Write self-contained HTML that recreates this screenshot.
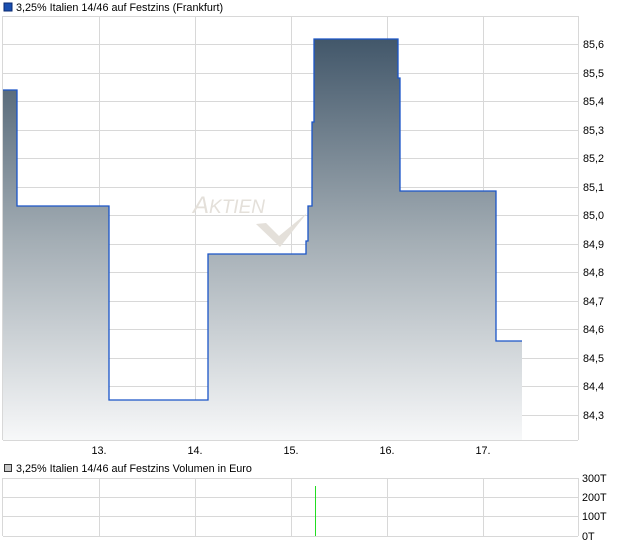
<!DOCTYPE html>
<html><head><style>
body{margin:0;width:620px;height:546px;background:#fff;font-family:"Liberation Sans",sans-serif;font-size:11px;color:#000;overflow:hidden}
</style></head><body>
<svg width="620" height="546" xmlns="http://www.w3.org/2000/svg" font-family="Liberation Sans, sans-serif" font-size="10.8">
<defs><linearGradient id="g" x1="0" y1="39" x2="0" y2="440" gradientUnits="userSpaceOnUse">
<stop offset="0" stop-color="#42576a"/><stop offset="0.5" stop-color="#a3adb4"/><stop offset="1" stop-color="#f7f8f9"/></linearGradient></defs>
<rect x="4" y="3" width="8" height="8" fill="#1a4fb0" stroke="#0a2a70" stroke-width="1"/>
<text x="16" y="11">3,25% Italien 14/46 auf Festzins (Frankfurt)</text>
<g stroke="#d8d8d8" stroke-width="1">
<line x1="3" y1="16.5" x2="578" y2="16.5"/>
<line x1="3" y1="44.5" x2="578" y2="44.5"/><line x1="3" y1="73.5" x2="578" y2="73.5"/><line x1="3" y1="101.5" x2="578" y2="101.5"/><line x1="3" y1="130.5" x2="578" y2="130.5"/><line x1="3" y1="158.5" x2="578" y2="158.5"/><line x1="3" y1="187.5" x2="578" y2="187.5"/><line x1="3" y1="215.5" x2="578" y2="215.5"/><line x1="3" y1="244.5" x2="578" y2="244.5"/><line x1="3" y1="272.5" x2="578" y2="272.5"/><line x1="3" y1="301.5" x2="578" y2="301.5"/><line x1="3" y1="329.5" x2="578" y2="329.5"/><line x1="3" y1="358.5" x2="578" y2="358.5"/><line x1="3" y1="386.5" x2="578" y2="386.5"/><line x1="3" y1="415.5" x2="578" y2="415.5"/>
<line x1="3" y1="440.5" x2="578" y2="440.5"/>
<line x1="2.5" y1="16" x2="2.5" y2="440"/><line x1="578.5" y1="16" x2="578.5" y2="440"/>
<line x1="99.5" y1="16" x2="99.5" y2="440"/><line x1="195.5" y1="16" x2="195.5" y2="440"/><line x1="291.5" y1="16" x2="291.5" y2="440"/><line x1="387.5" y1="16" x2="387.5" y2="440"/><line x1="483.5" y1="16" x2="483.5" y2="440"/>
<line x1="3" y1="478.5" x2="578" y2="478.5"/><line x1="3" y1="497.5" x2="578" y2="497.5"/><line x1="3" y1="516.5" x2="578" y2="516.5"/><line x1="3" y1="536.5" x2="578" y2="536.5"/>
<line x1="2.5" y1="478" x2="2.5" y2="536"/><line x1="578.5" y1="478" x2="578.5" y2="536"/>
<line x1="99.5" y1="478" x2="99.5" y2="536"/><line x1="195.5" y1="478" x2="195.5" y2="536"/><line x1="291.5" y1="478" x2="291.5" y2="536"/><line x1="387.5" y1="478" x2="387.5" y2="536"/><line x1="483.5" y1="478" x2="483.5" y2="536"/>
</g>
<text x="193" y="213" font-size="24" font-style="italic" fill="#e4e0da">A<tspan font-size="19">KTIEN</tspan></text>
<path d="M256 224 L266 223 L279 236 L307 213 L280 247 Z" fill="#e4e0da"/>
<path d="M3 440 L3 90 L17 90 L17 206 L109 206 L109 400 L208 400 L208 254 L306 254 L306 241 L308 241 L308 206 L312 206 L312 122 L314 122 L314 39 L398 39 L398 78 L400 78 L400 191 L496 191 L496 341 L522 341 L522 440 Z" fill="url(#g)"/>
<path d="M3 90 L17 90 L17 206 L109 206 L109 400 L208 400 L208 254 L306 254 L306 241 L308 241 L308 206 L312 206 L312 122 L314 122 L314 39 L398 39 L398 78 L400 78 L400 191 L496 191 L496 341 L522 341" fill="none" stroke="#1a55c8" stroke-width="1.3"/>
<g>
<text x="583" y="48">85,6</text><text x="583" y="77">85,5</text><text x="583" y="105">85,4</text><text x="583" y="134">85,3</text><text x="583" y="162">85,2</text><text x="583" y="191">85,1</text><text x="583" y="219">85,0</text><text x="583" y="248">84,9</text><text x="583" y="276">84,8</text><text x="583" y="305">84,7</text><text x="583" y="333">84,6</text><text x="583" y="362">84,5</text><text x="583" y="390">84,4</text><text x="583" y="419">84,3</text>
</g>
<g text-anchor="middle"><text x="99" y="454">13.</text><text x="195" y="454">14.</text><text x="291" y="454">15.</text><text x="387" y="454">16.</text><text x="483" y="454">17.</text></g>
<rect x="4.5" y="464.5" width="7" height="7" fill="#c8c8c8" stroke="#333" stroke-width="1"/>
<text x="16" y="472">3,25% Italien 14/46 auf Festzins Volumen in Euro</text>
<rect x="315" y="486" width="1" height="50" fill="#22dd22"/>
<text x="582" y="482">300T</text><text x="582" y="501">200T</text><text x="582" y="520">100T</text><text x="582" y="540">0T</text>
</svg>
</body></html>
